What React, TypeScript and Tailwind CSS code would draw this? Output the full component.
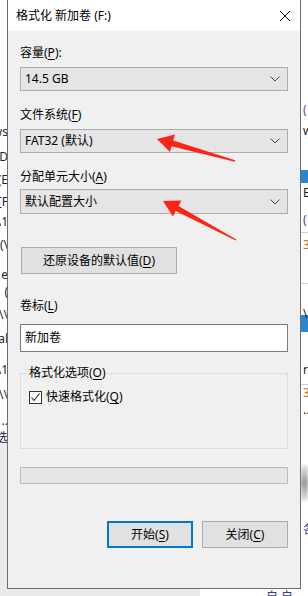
import React from "react";

const font = { fontFamily: '"Noto Sans", "Noto Sans CJK SC", sans-serif' };

function Key({ k }: { k: string }) {
  return <span className="underline underline-offset-2">{k}</span>;
}

function Chevron() {
  return (
    <svg width="10" height="6" viewBox="0 0 10 6" className="shrink-0">
      <path d="M0.5 0.5 L5 5 L9.5 0.5" fill="none" stroke="#444" strokeWidth="1" />
    </svg>
  );
}

function Select({ value, className = "" }: { value: string; className?: string }) {
  return (
    <div
      className={`w-[268px] flex items-center justify-between pl-[4px] pr-[7px] bg-[#e5e5e5] border border-[#adadad] text-[12px] leading-[16px] text-black ${className}`}
    >
      <span>{value}</span>
      <Chevron />
    </div>
  );
}

// background scraps showing past the dialog edges
const leftBits = [
  { y: 126, t: "ws" },
  { y: 151, t: "(D" },
  { y: 174, t: "(E" },
  { y: 196, t: "[F" },
  { y: 216, t: "\\1" },
  { y: 239, t: "(\\" },
  { y: 269, t: "e" },
  { y: 286, t: "(" },
  { y: 309, t: "\\\\" },
  { y: 333, t: "al" },
  { y: 364, t: "\\1" },
  { y: 389, t: "\\\\" },
  { y: 415, t: ".." },
  { y: 432, t: "选" },
];

const rightBits = [
  { y: 104, t: "(", c: "text-[#5a3fa0]" },
  { y: 125, t: "w", c: "text-[#222]" },
  { y: 187, t: "B", c: "text-[#222]" },
  { y: 214, t: "(", c: "text-[#3a3aa0]" },
  { y: 239, t: "3", c: "text-[#c07020]" },
  { y: 308, t: "\\", c: "text-[#222]" },
  { y: 364, t: "re", c: "text-[#222]" },
  { y: 387, t: "3", c: "text-[#c07020]" },
  { y: 404, t: "...", c: "text-[#222]" },
  { y: 524, t: "各", c: "text-[#3a3a90]" },
];

export default function App() {
  return (
    <div className="relative w-[308px] h-[596px] overflow-hidden bg-[#f4f4f4]" style={font}>
      <div className="flex h-[589px]">
        {/* left backdrop */}
        <div className="relative w-[7px] h-full bg-white overflow-hidden">
          <div className="absolute left-0 top-[440px] w-full h-[160px] bg-[#ececec]" />
          {leftBits.map((b, i) => (
            <div
              key={i}
              className="absolute right-[-1px] text-[12px] leading-[12px] text-[#1c2340] whitespace-nowrap"
              style={{ top: b.y }}
            >
              {b.t}
            </div>
          ))}
        </div>

        {/* dialog */}
        <div className="w-[294px] h-[589px] flex flex-col border-x border-b border-[#6f6f6f] bg-[#f0f0f0] shadow-[0_2px_6px_rgba(0,0,0,0.25)]">
          <div className="h-[31px] bg-white flex items-center justify-between pl-[8px] pr-[8px]">
            <span className="text-[12px] leading-[16px] text-black">格式化 新加卷 (F:)</span>
            <svg width="12" height="12" viewBox="0 0 12 12" className="mr-[1px]">
              <path d="M1 1 L11 11 M11 1 L1 11" stroke="#111" strokeWidth="1" />
            </svg>
          </div>

          <div className="flex flex-col pl-[12px] text-[12px] leading-[16px] text-black">
            <div className="mt-[14px] h-[16px]">
              容量(<Key k="P" />):
            </div>
            <Select value="14.5 GB" className="mt-[6px] h-[24px]" />

            <div className="mt-[16px] h-[16px]">
              文件系统(<Key k="F" />)
            </div>
            <Select value="FAT32 (默认)" className="mt-[6px] h-[24px]" />

            <div className="mt-[16px] h-[16px]">
              分配单元大小(<Key k="A" />)
            </div>
            <Select value="默认配置大小" className="mt-[4px] h-[25px]" />

            <button className="mt-[33px] ml-[1px] w-[156px] h-[27px] bg-[#e1e1e1] border border-[#adadad] text-[12px] leading-[16px] text-black">
              还原设备的默认值(<Key k="D" />)
            </button>

            <div className="mt-[24px] h-[16px]">
              卷标(<Key k="L" />)
            </div>
            <div className="mt-[10px] w-[268px] h-[28px] bg-white border border-[#7a7a7a] flex items-center pl-[4px]">
              新加卷
            </div>

            <fieldset className="mt-[13px] w-[268px] h-[84px] border border-[#dcdcdc]">
              <legend className="ml-[7px] px-[1px] text-[12px] leading-[16px]">
                格式化选项(<Key k="O" />)
              </legend>
              <label className="flex items-center gap-[4px] mt-[8px] ml-[8px]">
                <span className="w-[13px] h-[13px] bg-white border border-[#333] flex items-center justify-center">
                  <svg width="11" height="11" viewBox="0 0 11 11">
                    <path d="M1.5 5.5 L4 8.5 L9.5 1.5" fill="none" stroke="#222" strokeWidth="1.1" />
                  </svg>
                </span>
                <span>
                  快速格式化(<Key k="Q" />)
                </span>
              </label>
            </fieldset>

            <div className="mt-[18px] w-[268px] h-[17px] bg-[#e6e6e6] border border-[#bcbcbc]" />

            <div className="mt-[37px] w-[268px] flex justify-end gap-[9px]">
              <button className="w-[86px] h-[27px] bg-[#e1e1e1] border-2 border-[#0078d7] text-[12px] leading-[16px] text-black">
                开始(<Key k="S" />)
              </button>
              <button className="w-[86px] h-[27px] bg-[#e1e1e1] border border-[#adadad] text-[12px] leading-[16px] text-black">
                关闭(<Key k="C" />)
              </button>
            </div>
          </div>
        </div>

        {/* right backdrop */}
        <div className="relative w-[7px] h-full bg-white overflow-hidden">
          <div className="absolute left-0 top-[170px] w-full h-[13px] bg-[#2b86cf]" />
          <div className="absolute left-0 top-[232px] w-full h-px bg-[#d0d0d0]" />
          <div className="absolute left-0 top-[283px] w-full h-px bg-[#d0d0d0]" />
          <div className="absolute left-0 top-[315px] w-full h-[17px] bg-[#2b86cf]" />
          <div className="absolute left-0 top-[384px] w-full h-px bg-[#d0d0d0]" />
          <div className="absolute left-0 top-[465px] w-full h-[36px] bg-gradient-to-b from-[#e8e8e8] via-[#9a9a9a] to-[#e8e8e8] blur-[1px]" />
          {rightBits.map((b, i) => (
            <div
              key={i}
              className={`absolute left-[2px] text-[12px] leading-[12px] whitespace-nowrap ${b.c}`}
              style={{ top: b.y }}
            >
              {b.t}
            </div>
          ))}
        </div>
      </div>

      <div className="flex h-[7px]">
        <div className="w-[200px] bg-[#ebebeb]" />
        <div className="flex-1 bg-white text-[12px] leading-[16px] text-[#3a3a90] pl-[66px] overflow-hidden">
          自 自
        </div>
      </div>

      {/* red annotation arrows */}
      <svg className="absolute inset-0 pointer-events-none" width="308" height="596" viewBox="0 0 308 596">
        <polygon
          points="157,139 175,134.6 173.2,140.4 235.2,160.3 234.8,161.7 171.6,146.2 170,152"
          fill="#ff2418"
        />
        <polygon
          points="163,201 181.3,200.6 178.5,205.9 236.3,239.4 235.7,240.6 175.7,211.1 172.9,216.4"
          fill="#ff2418"
        />
      </svg>
    </div>
  );
}
